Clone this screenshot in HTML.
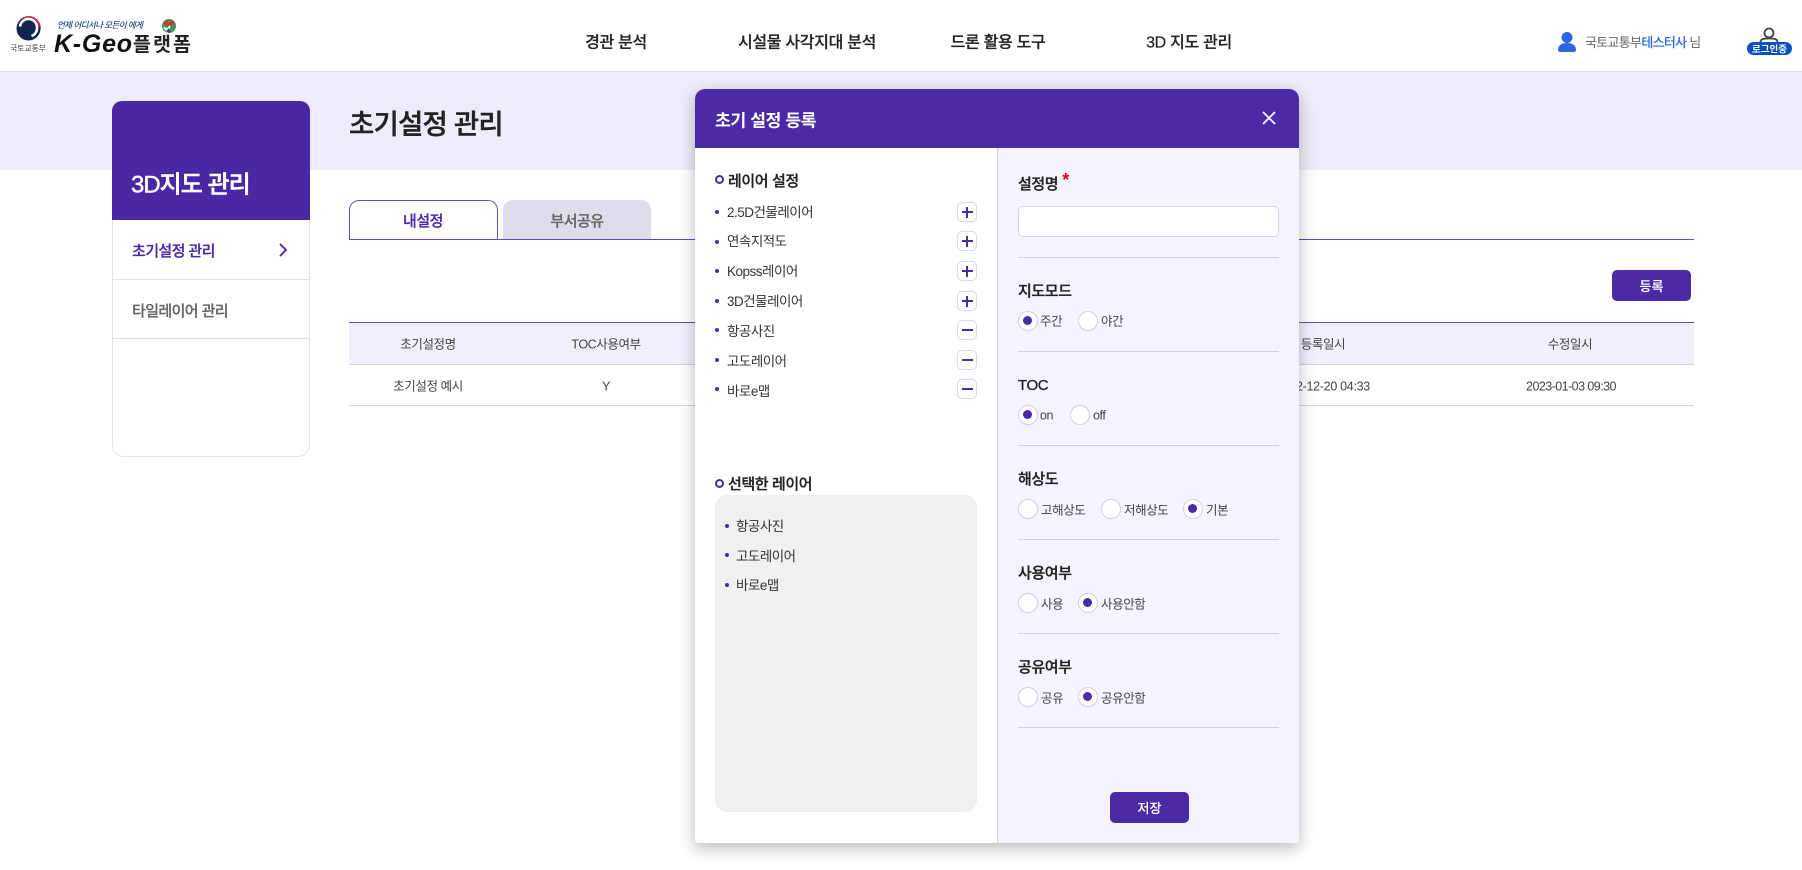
<!DOCTYPE html>
<html lang="ko"><head><meta charset="utf-8"><title>초기설정 관리</title>
<style>
*{box-sizing:border-box;margin:0;padding:0}
html,body{width:1802px;height:870px;overflow:hidden;background:#fff}
body{position:relative;font-family:"Liberation Sans","Noto Sans CJK KR",sans-serif;color:#333}
.a{position:absolute}
.t{position:absolute;white-space:nowrap;transform:translateY(-50%);line-height:1.2;margin-top:1px}
.c{transform:translate(-50%,-50%)}
.m{-webkit-text-stroke:.25px currentColor}
.nav{font-size:16px;font-weight:500;color:#222;letter-spacing:-.3px;margin-top:2px;-webkit-text-stroke:.2px #222}
.li{font-size:13.5px;color:#333;letter-spacing:-.5px}
.bul{position:absolute;width:4px;height:4px;border-radius:50%;background:#4b2aa8}
.ring{position:absolute;width:9px;height:9px;border-radius:50%;border:2px solid #4b2aa8}
.h{font-size:15px;font-weight:500;color:#222;letter-spacing:-.4px;-webkit-text-stroke:.3px #222}
.ib{position:absolute;left:957px;width:20px;height:20px;border:1.5px solid #dcd6ef;border-radius:5px;background:#fff}
.ib:before{content:"";position:absolute;left:3.5px;right:3.5px;top:7.5px;height:2px;background:#4b2aa8}
.ib.p:after{content:"";position:absolute;top:3.5px;bottom:3.5px;left:7.5px;width:2px;background:#4b2aa8}
.r{position:absolute;width:20px;height:20px;border:1.5px solid #d3cde8;border-radius:50%;background:#fff}
.r.on:after{content:"";position:absolute;left:4px;top:4px;width:9px;height:9px;border-radius:50%;background:#4b2aa8}
.rt{font-size:12.5px;color:#444;letter-spacing:-.4px}
.dv{position:absolute;left:1018px;width:261px;height:1px;background:#d5cfe6}
.th{font-size:12.5px;color:#444;letter-spacing:-.4px}
.btn{position:absolute;background:#4b2aa8;border-radius:5px;color:#fff;font-size:13px;font-weight:500;text-align:center;-webkit-text-stroke:.1px #fff}
</style></head><body>

<!-- header -->
<div class="a" style="left:0;top:0;width:1802px;height:72px;background:#fff;border-bottom:1px solid #dfdcf0"></div>
<svg class="a" style="left:0;top:0" width="200" height="70" viewBox="0 0 200 70">
<circle cx="28.5" cy="28.5" r="12" fill="#11264f"/>
<path d="M20 19.500A12.300 12.300 0 0 1 40.800 29.500A16 16 0 0 0 20 19.500z" fill="#c8243a"/>
<path d="M20 26.500a8.500 8.500 0 0 1 17 2a8 8 0 0 1-5.500 7.500" fill="none" stroke="#fff" stroke-width="2.600"/>
<text x="28" y="51" text-anchor="middle" font-size="8" fill="#444" font-family="Noto Sans CJK KR" textLength="36">국토교통부</text>
<text x="57" y="28" font-size="8.500" font-weight="500" fill="#1d4a8c" font-style="italic" font-family="Noto Sans CJK KR" textLength="86">언제 어디서나 모든이 에게</text>
<text x="54" y="52" font-size="25" font-style="italic" font-weight="700" fill="#111" font-family="Liberation Sans" textLength="78">K-Geo</text>
<text x="133" y="51" font-size="19.500" font-weight="700" fill="#222" font-family="Noto Sans CJK KR" textLength="58">플랫폼</text>
<circle cx="169" cy="26" r="7" fill="#3c9a4f"/>
<path d="M163 24l4-4 2 3 3-3 3 4-4 1-2 3-3-3z" fill="#d8322e"/>
<path d="M162.500 27l5 1 2-3 1 3-3 5z" fill="#fff"/>
<path d="M166 31l3-3 1 3 2-1-3 3z" fill="#1d4a8c"/>
</svg>
<div class="t c nav" style="left:616px;top:41px">경관 분석</div>
<div class="t c nav" style="left:807px;top:41px">시설물 사각지대 분석</div>
<div class="t c nav" style="left:998px;top:41px">드론 활용 도구</div>
<div class="t c nav" style="left:1189px;top:41px">3D 지도 관리</div>
<svg class="a" style="left:1556px;top:30px" width="22" height="24" viewBox="0 0 22 24">
<circle cx="11" cy="7.500" r="5.500" fill="#2a66e0"/>
<path d="M2 20c0-5 4-7 9-7s9 2 9 7c0 1-1 2-2 2H4c-1 0-2-1-2-2z" fill="#2a66e0"/>
</svg>
<div class="t" style="left:1585px;top:42px;font-size:13px;color:#666;letter-spacing:-.7px">국토교통부<span style="color:#2a66e0;font-weight:500">테스터사</span> 님</div>
<svg class="a" style="left:1745px;top:26px" width="50" height="32" viewBox="0 0 50 32">
<circle cx="24" cy="7" r="4.500" fill="none" stroke="#444" stroke-width="1.800"/>
<path d="M15.500 16c0-3 3-3.500 8.500-3.500s8.500 .5 8.500 3.500" fill="none" stroke="#444" stroke-width="1.800"/>
<rect x="2" y="16" width="45" height="13" rx="6.500" fill="#0b4fc0"/>
<text x="24.500" y="26.300" text-anchor="middle" font-size="9.500" font-weight="700" fill="#fff" font-family="Noto Sans CJK KR">로그인중</text>
</svg>

<!-- band -->
<div class="a" style="left:0;top:72px;width:1802px;height:98px;background:#eeecf8"></div>

<!-- sidebar -->
<div class="a" style="left:112px;top:101px;width:198px;height:356px;background:#fff;border:1.5px solid #e4e4e8;border-radius:12px"></div>
<div class="a" style="left:112px;top:101px;width:198px;height:119px;background:#4a28a5;border-radius:10px 10px 0 0"></div>
<div class="t" style="left:131px;top:185px;font-size:24px;font-weight:500;color:#fff;letter-spacing:-1px;-webkit-text-stroke:.45px #fff">3D지도 관리</div>
<div class="t m" style="left:132px;top:251px;font-size:15px;font-weight:500;color:#4a28a5;letter-spacing:-.6px">초기설정 관리</div>
<svg class="a" style="left:277px;top:242px" width="12" height="16" viewBox="0 0 12 16"><path d="M3 2l6 6-6 6" fill="none" stroke="#4a28a5" stroke-width="1.800"/></svg>
<div class="a" style="left:113px;top:279px;width:196px;height:1px;background:#e2e2e6"></div>
<div class="t m" style="left:132px;top:311px;font-size:15px;font-weight:500;color:#666;letter-spacing:-.6px">타일레이어 관리</div>
<div class="a" style="left:113px;top:338px;width:196px;height:1px;background:#e2e2e6"></div>

<!-- main -->
<div class="t" style="left:349px;top:123px;font-size:27.5px;font-weight:500;color:#222;letter-spacing:-.8px;-webkit-text-stroke:.4px #222">초기설정 관리</div>
<div class="a" style="left:349px;top:200px;width:149px;height:40px;background:#fff;border:1.5px solid #6a48bd;border-bottom:0;border-radius:10px 10px 0 0"></div>
<div class="a" style="left:503px;top:200px;width:148px;height:39px;background:#dfdde9;border-radius:10px 10px 0 0"></div>
<div class="t c m" style="left:423px;top:221px;font-size:15px;font-weight:500;color:#4a28a5;letter-spacing:-.5px">내설정</div>
<div class="t c m" style="left:577px;top:221px;font-size:15px;font-weight:500;color:#666;letter-spacing:-.5px">부서공유</div>
<div class="a" style="left:349px;top:239px;width:1345px;height:1px;background:#6a48bd"></div>
<div class="btn" style="left:1612px;top:270px;width:79px;height:31px;line-height:33px">등록</div>

<div class="a" style="left:349px;top:322px;width:1345px;height:43px;background:#f1effc;border-top:1.500px solid #6a48bd;border-bottom:1px solid #d5d2e6"></div>
<div class="a" style="left:349px;top:405px;width:1345px;height:1px;background:#d5d2e6"></div>
<div class="t c th" style="left:428px;top:344px">초기설정명</div>
<div class="t c th" style="left:606px;top:344px">TOC사용여부</div>
<div class="t c th" style="left:1323px;top:344px">등록일시</div>
<div class="t c th" style="left:1570px;top:344px">수정일시</div>
<div class="t c th" style="left:428px;top:386px">초기설정 예시</div>
<div class="t c th" style="left:606px;top:386px">Y</div>
<div class="t c th" style="left:1323px;top:386px;letter-spacing:-.3px">2022-12-20 04:33</div>
<div class="t c th" style="left:1571px;top:386px;letter-spacing:-.55px">2023-01-03 09:30</div>

<!-- modal -->
<div class="a" style="left:695px;top:89px;width:604px;height:754px;background:#fff;border-radius:10px 10px 3px 3px;box-shadow:0 5px 16px rgba(0,0,0,.28)"></div>
<div class="a" style="left:997px;top:148px;width:302px;height:695px;background:#f6f3fe;border-left:1px solid #d5cfe6;border-radius:0 0 3px 0"></div>
<div class="a" style="left:695px;top:89px;width:604px;height:59px;background:#4b2aa8;border-radius:10px 10px 0 0"></div>
<div class="t" style="left:715px;top:120px;font-size:17.3px;font-weight:700;color:#fff;letter-spacing:-.5px">초기 설정 등록</div>
<svg class="a" style="left:1261px;top:110px" width="16" height="16" viewBox="0 0 16 16"><path d="M2 2l12 12M14 2L2 14" stroke="#fff" stroke-width="1.800" fill="none"/></svg>

<div class="ring" style="left:715px;top:175px"></div>
<div class="t h" style="left:728px;top:181px">레이어 설정</div>

<div class="bul" style="left:715px;top:210px"></div><div class="t li" style="left:727px;top:212px">2.5D건물레이어</div><div class="ib p" style="top:202px"></div>
<div class="bul" style="left:715px;top:240px"></div><div class="t li" style="left:727px;top:241px">연속지적도</div><div class="ib p" style="top:231px"></div>
<div class="bul" style="left:715px;top:269px"></div><div class="t li" style="left:727px;top:271px">Kopss레이어</div><div class="ib p" style="top:261px"></div>
<div class="bul" style="left:715px;top:299px"></div><div class="t li" style="left:727px;top:301px">3D건물레이어</div><div class="ib p" style="top:291px"></div>
<div class="bul" style="left:715px;top:328px"></div><div class="t li" style="left:727px;top:331px">항공사진</div><div class="ib" style="top:320px"></div>
<div class="bul" style="left:715px;top:358px"></div><div class="t li" style="left:727px;top:361px">고도레이어</div><div class="ib" style="top:350px"></div>
<div class="bul" style="left:715px;top:387px"></div><div class="t li" style="left:727px;top:391px">바로e맵</div><div class="ib" style="top:379px"></div>

<div class="ring" style="left:715px;top:479px"></div>
<div class="t h" style="left:728px;top:484px">선택한 레이어</div>
<div class="a" style="left:715px;top:495px;width:262px;height:317px;background:#f0f0f0;border-radius:12px"></div>
<div class="bul" style="left:725px;top:524px"></div><div class="t li" style="left:736px;top:526px">항공사진</div>
<div class="bul" style="left:725px;top:553px"></div><div class="t li" style="left:736px;top:556px">고도레이어</div>
<div class="bul" style="left:725px;top:583px"></div><div class="t li" style="left:736px;top:585px">바로e맵</div>

<div class="t h" style="left:1018px;top:183px">설정명<span style="color:#e60012;font-size:18px;font-weight:700;position:relative;top:-3px;margin-left:4px;line-height:1;-webkit-text-stroke:0">*</span></div>
<div class="a" style="left:1018px;top:206px;width:261px;height:31px;background:#fff;border:1.5px solid #d9d2ee;border-radius:5px"></div>
<div class="dv" style="top:257px"></div>

<div class="t h" style="left:1018px;top:291px">지도모드</div>
<div class="r on" style="left:1018px;top:311px"></div><div class="t rt" style="left:1040px;top:321px">주간</div>
<div class="r" style="left:1078px;top:311px"></div><div class="t rt" style="left:1101px;top:321px">야간</div>
<div class="dv" style="top:351px"></div>

<div class="t h" style="left:1018px;top:385px">TOC</div>
<div class="r on" style="left:1018px;top:405px"></div><div class="t rt" style="left:1040px;top:415px">on</div>
<div class="r" style="left:1070px;top:405px"></div><div class="t rt" style="left:1093px;top:415px">off</div>
<div class="dv" style="top:445px"></div>

<div class="t h" style="left:1018px;top:479px">해상도</div>
<div class="r" style="left:1018px;top:499px"></div><div class="t rt" style="left:1041px;top:510px">고해상도</div>
<div class="r" style="left:1101px;top:499px"></div><div class="t rt" style="left:1124px;top:510px">저해상도</div>
<div class="r on" style="left:1183px;top:499px"></div><div class="t rt" style="left:1206px;top:510px">기본</div>
<div class="dv" style="top:539px"></div>

<div class="t h" style="left:1018px;top:573px">사용여부</div>
<div class="r" style="left:1018px;top:593px"></div><div class="t rt" style="left:1041px;top:604px">사용</div>
<div class="r on" style="left:1078px;top:593px"></div><div class="t rt" style="left:1101px;top:604px">사용안함</div>
<div class="dv" style="top:633px"></div>

<div class="t h" style="left:1018px;top:667px">공유여부</div>
<div class="r" style="left:1018px;top:687px"></div><div class="t rt" style="left:1041px;top:698px">공유</div>
<div class="r on" style="left:1078px;top:687px"></div><div class="t rt" style="left:1101px;top:698px">공유안함</div>
<div class="dv" style="top:727px"></div>

<div class="btn" style="left:1110px;top:792px;width:79px;height:31px;line-height:33px">저장</div>
</body></html>
